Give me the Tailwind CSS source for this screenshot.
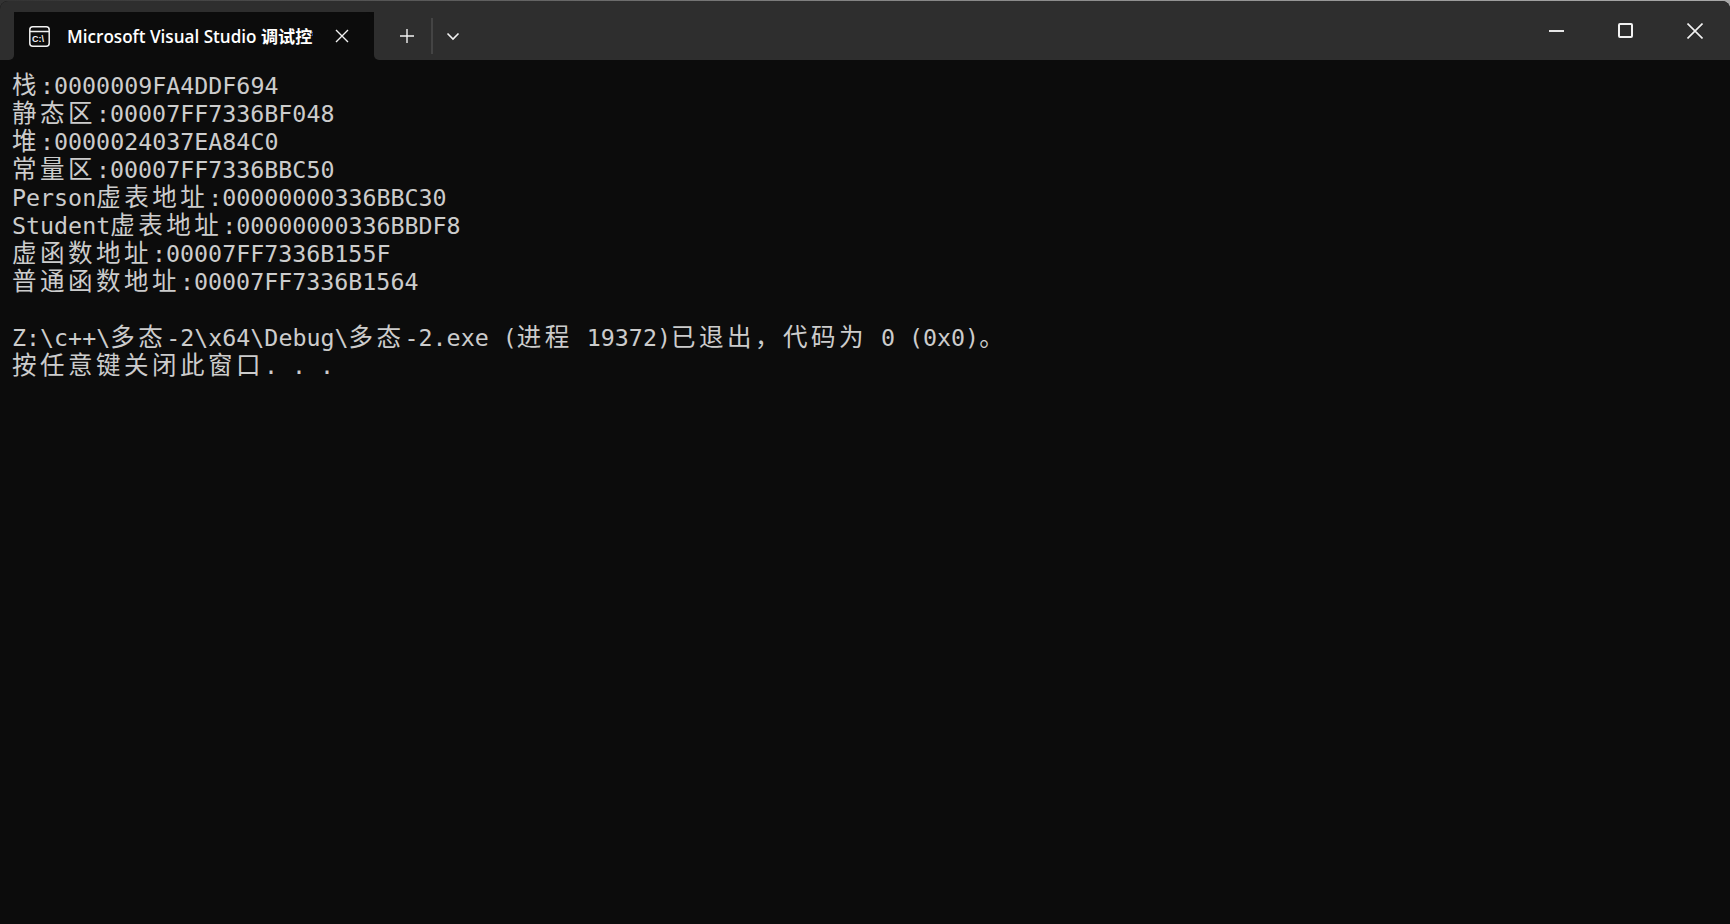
<!DOCTYPE html>
<html lang="zh-CN">
<head>
  <meta charset="UTF-8" />
  <title>Microsoft Visual Studio 调试控制台</title>
  <script src="https://cdn.jsdelivr.net/npm/@tailwindcss/browser@4"></script>
</head>
<body class="h-screen w-screen overflow-hidden bg-linear-to-r from-[#333333] via-[#858585] to-[#a8a8a8]">
  <div class="h-[923px] mt-px flex flex-col rounded-t-[8px] overflow-hidden bg-[#0c0c0c]">

    <!-- title bar -->
    <div class="h-[59px] shrink-0 flex flex-col font-['Open_Sans','Noto_Sans_CJK_SC',sans-serif]">
      <div class="h-[11px] bg-[#2e2e2e]"></div>
      <div class="h-[48px] flex bg-[#0c0c0c]">
        <div class="w-[14px] bg-[#2e2e2e] rounded-br-[5px]"></div>
        <div class="w-[360px] flex items-center rounded-t-[8px] bg-[#0c0c0c] text-white">
          <svg class="ml-[15px] w-[21px] h-[21px]" viewBox="0 0 21 21" fill="none" stroke="#f2f2f2" stroke-width="1.5">
            <rect x="0.8" y="0.8" width="19.4" height="19.4" rx="3" />
            <path d="M1 5.500h19" />
            <text x="3" y="16.300" font-family="Liberation Sans" font-size="9" font-weight="700" fill="#f2f2f2" stroke="none">C:\</text>
          </svg>
          <div class="ml-[17px] mt-[2px] w-[246px] overflow-hidden whitespace-nowrap text-[17.1px] font-semibold leading-[24px]">Microsoft Visual Studio 调试控制台</div>
          <svg class="ml-[22px] w-[14px] h-[14px]" viewBox="0 0 14 14" stroke="#f2f2f2" stroke-width="1.4"><path d="M1 1l12 12M13 1L1 13" /></svg>
        </div>
        <div class="flex-1 flex bg-[#2e2e2e] rounded-bl-[5px]">
          <div class="flex items-center">
            <svg class="ml-[25px] w-[16px] h-[16px]" viewBox="0 0 16 16" stroke="#f2f2f2" stroke-width="1.4"><path d="M8 1v14M1 8h14" /></svg>
            <div class="ml-[16px] w-[2px] h-[36px] bg-[#444444]"></div>
            <svg class="ml-[13px] w-[14px] h-[14px]" viewBox="0 0 14 14" fill="none" stroke="#f2f2f2" stroke-width="1.6"><path d="M1.500 4.500L7 10l5.500-5.500" /></svg>
          </div>
          <div class="ml-auto mt-[11px] h-[15px] flex items-center">
            <div class="w-[15px] h-[2px] bg-[#e6e6e6]"></div>
            <div class="ml-[54px] w-[15px] h-[15px] rounded-[2px] border-2 border-[#f2f2f2]"></div>
            <svg class="ml-[54px] mr-[27px] w-[16px] h-[16px]" viewBox="0 0 16 16" stroke="#f2f2f2" stroke-width="1.6"><path d="M.5.5l15 15M15.500.5l-15 15" /></svg>
          </div>
        </div>
      </div>
    </div>

    <!-- console output -->
    <div class="flex-1 pt-[12px] pl-[12px] text-[#cccccc] text-[23.3px] leading-[28px] whitespace-nowrap font-['DejaVu_Sans_Mono','Noto_Sans_CJK_SC',monospace]">
      <div class="h-[28px]"><span class="text-[24.5px] tracking-[3.5px]">栈</span>:0000009FA4DDF694</div>
      <div class="h-[28px]"><span class="text-[24.5px] tracking-[3.5px]">静态区</span>:00007FF7336BF048</div>
      <div class="h-[28px]"><span class="text-[24.5px] tracking-[3.5px]">堆</span>:0000024037EA84C0</div>
      <div class="h-[28px]"><span class="text-[24.5px] tracking-[3.5px]">常量区</span>:00007FF7336BBC50</div>
      <div class="h-[28px]">Person<span class="text-[24.5px] tracking-[3.5px]">虚表地址</span>:00000000336BBC30</div>
      <div class="h-[28px]">Student<span class="text-[24.5px] tracking-[3.5px]">虚表地址</span>:00000000336BBDF8</div>
      <div class="h-[28px]"><span class="text-[24.5px] tracking-[3.5px]">虚函数地址</span>:00007FF7336B155F</div>
      <div class="h-[28px]"><span class="text-[24.5px] tracking-[3.5px]">普通函数地址</span>:00007FF7336B1564</div>
      <div class="h-[28px]"></div>
      <div class="h-[28px]">Z:\c++\<span class="text-[24.5px] tracking-[3.5px]">多态</span>-2\x64\Debug\<span class="text-[24.5px] tracking-[3.5px]">多态</span>-2.exe (<span class="text-[24.5px] tracking-[3.5px]">进程</span> 19372)<span class="text-[24.5px] tracking-[3.5px]">已退出，代码为</span> 0 (0x0)<span class="text-[24.5px] tracking-[3.5px]">。</span></div>
      <div class="h-[28px]"><span class="text-[24.5px] tracking-[3.5px]">按任意键关闭此窗口</span>. . .</div>
    </div>
  </div>
</body>
</html>
